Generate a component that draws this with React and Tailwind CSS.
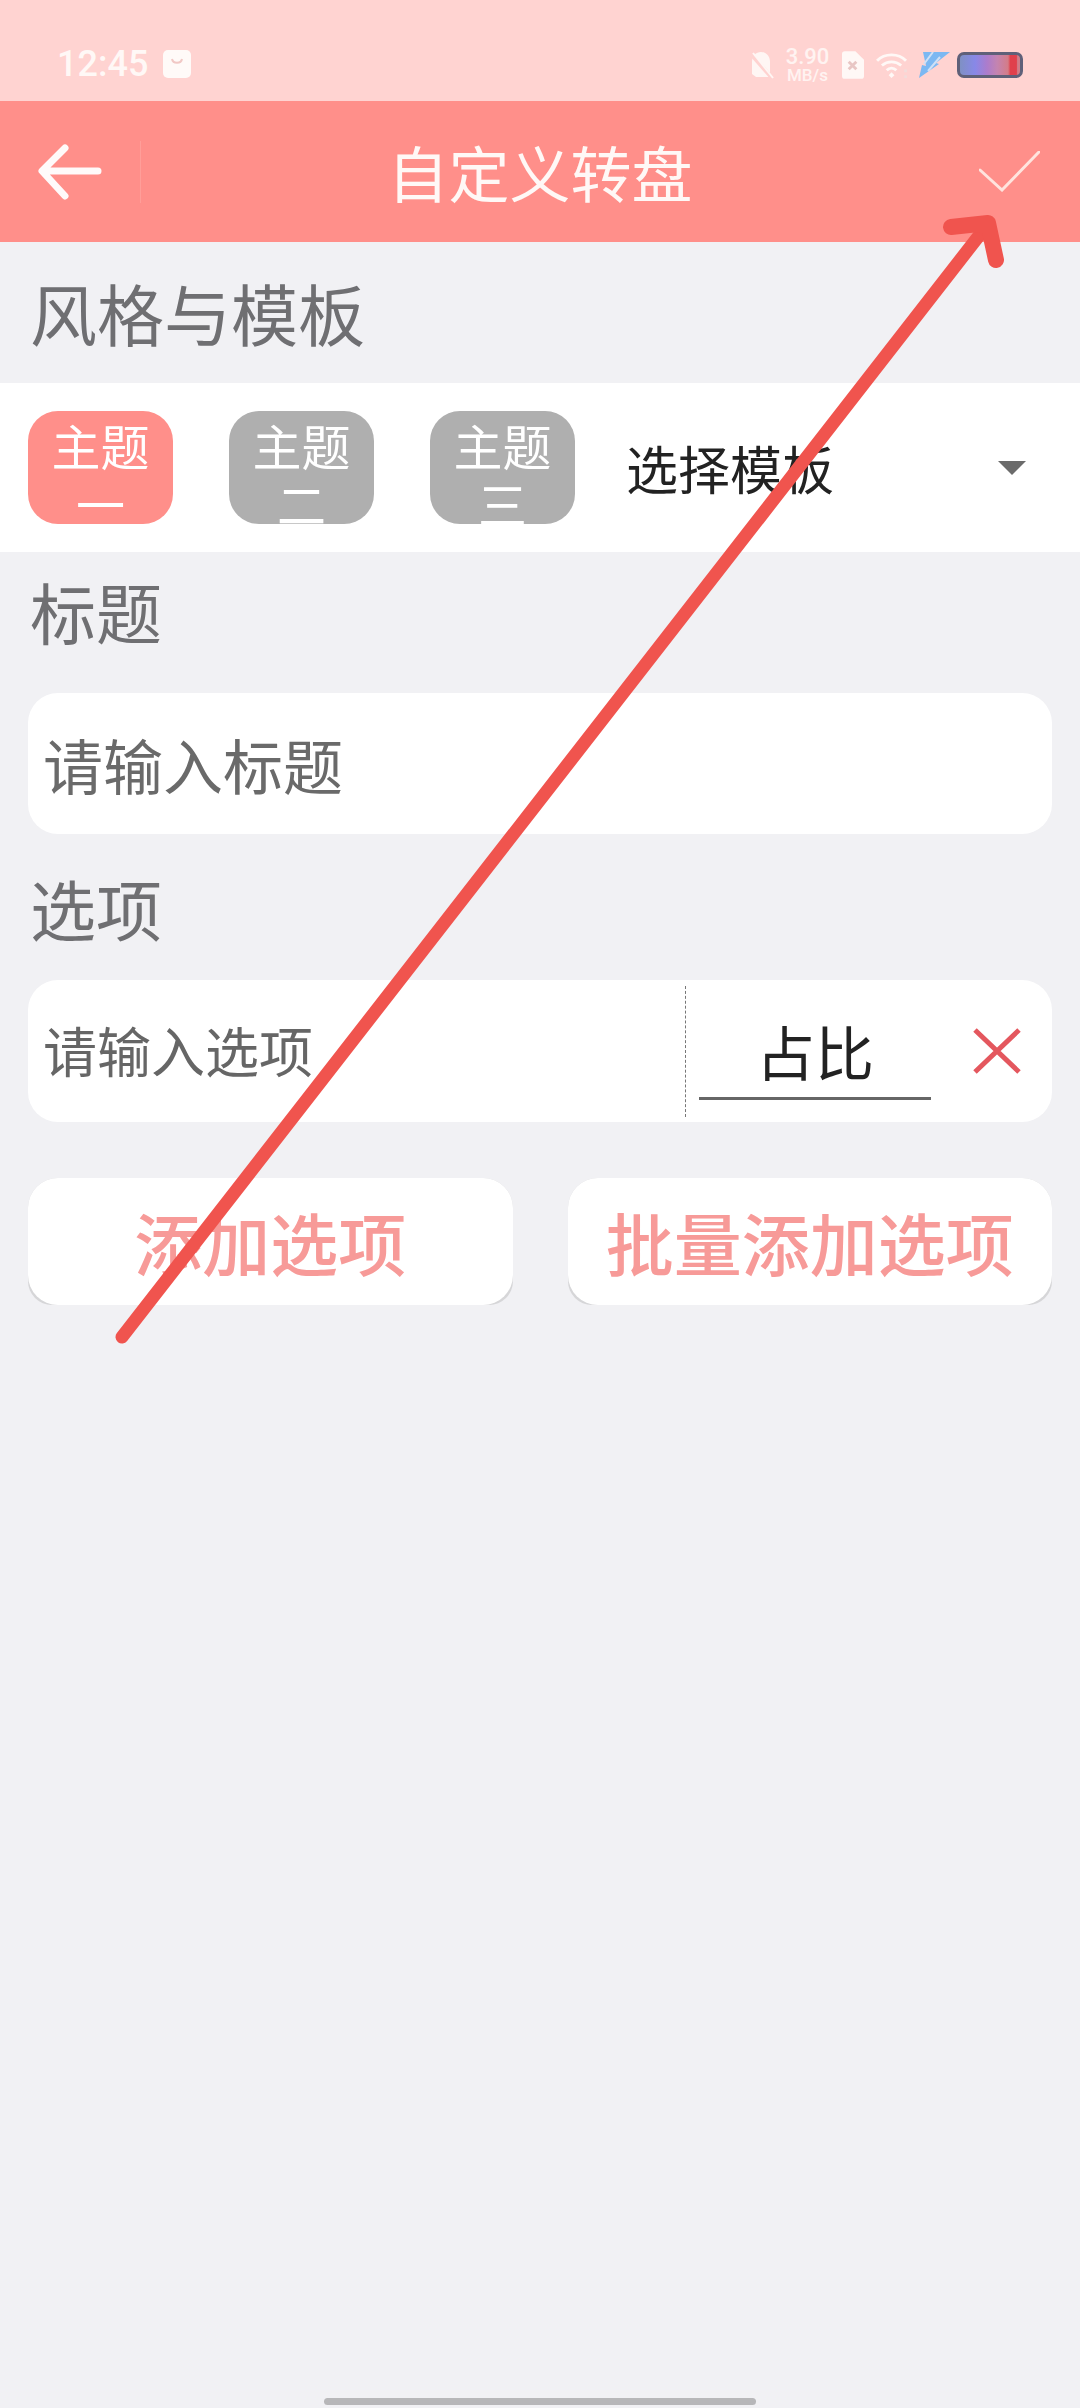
import React from 'react';

const CJK = "font-['Noto_Sans_CJK_SC','Noto_Sans',sans-serif]";

function StatusBar() {
  return (
    <div className="h-[101px] bg-[#ffd3d1] flex items-start pt-[47px] pl-[57px] pr-[57px] text-white">
      <span className="font-['Roboto',sans-serif] text-[36px] leading-[34px] font-medium text-[#fff8f6]">12:45</span>
      <svg width="28" height="28" viewBox="0 0 28 28" className="ml-[15px] mt-[3px]">
        <rect width="28" height="28" rx="5" fill="#fffaf8" />
        <path d="M9 9c1 5 9 5 10 0" fill="none" stroke="#f1c8c5" strokeWidth="2" />
      </svg>
      <div className="ml-auto flex items-center h-[36px]">
        {/* bell off */}
        <svg width="24" height="29" viewBox="0 0 24 29">
          <path d="M2 23V11C2 5 6 1 11 1s9 4 9 10v13l-2 2H6z" fill="#fff6f4" />
          <path d="M0 2l22 25" stroke="#ffd3d1" strokeWidth="4" />
          <path d="M3 2l20 25" stroke="#fff6f4" strokeWidth="2" />
        </svg>
        <div className="ml-[12px] w-[43px] flex flex-col items-center font-['Roboto',sans-serif] font-medium text-[#fff3f1]">
          <span className="text-[22px] leading-[20px]">3.90</span>
          <span className="text-[17px] leading-[16px]">MB/s</span>
        </div>
        {/* sim */}
        <svg width="22" height="28" viewBox="0 0 23 29" className="ml-[13px]">
          <path d="M3 0h11l9 9v17a3 3 0 0 1-3 3H3a3 3 0 0 1-3-3V3a3 3 0 0 1 3-3z" fill="#fff8f6" />
          <path d="M7 11l8 8M15 11l-8 8" stroke="#e8c6c4" strokeWidth="3" />
        </svg>
        {/* wifi */}
        <svg width="33" height="27" viewBox="0 0 34 28" fill="none" className="ml-[12px]" stroke="#fff8f6" strokeWidth="3">
          <path d="M1 9c8-8 22-8 30 0" />
          <path d="M6 14c6-5 14-5 20 0" />
          <path d="M11 19c3-3 7-3 10 0" />
          <path d="M13 24l3-3 3 3-3 3z" fill="#fff8f6" stroke="none" />
          <path d="M29 18h3v3h-3zM29 24h3v3h-3z" fill="#f3dcda" stroke="none" />
        </svg>
        {/* charging bolt */}
        <svg width="31" height="26" viewBox="0 0 31 26" className="ml-[10px]">
          <path d="M4 0H31L17 11l3 1L0 26l3-13 4 1z" fill="#7cb8f2" />
          <path d="M14 0L5 12M21 5L9 19" stroke="#cfe0f5" strokeWidth="2" />
        </svg>
        {/* battery */}
        <div className="ml-[7px] w-[66px] h-[26px] rounded-[7px] border-[3px] border-[#5f6079] bg-[linear-gradient(90deg,#7f90c4,#8888e8_25%,#ac7ccc_45%,#c484b0_62%,#d47c88_80%,#e0404c_84%,#e0404c_94%,#d07c88_96%)]" />
      </div>
    </div>
  );
}

function Header() {
  return (
    <div className="relative h-[141px] bg-[#ff8f8a] flex items-center justify-between pl-[38px] pr-[40px]">
      <div className="flex items-center gap-[38px]">
        <svg width="64" height="56" viewBox="0 0 64 56" fill="none" stroke="#fffafa" strokeWidth="7" strokeLinecap="round" strokeLinejoin="round">
          <path d="M60 27H5M27 4L4 27l23 25" />
        </svg>
        <div className="w-[1px] h-[62px] bg-[#ff9e99]" />
      </div>
      <span className="absolute left-0 right-0 text-center text-[61px] leading-[80px] text-[#fff8f6]">自定义转盘</span>
      <svg width="61" height="41" viewBox="0 0 61 41" fill="none" stroke="#ffe4de" strokeWidth="3" strokeLinecap="round">
        <path d="M1 19l22 20L60 1" />
      </svg>
    </div>
  );
}

function ThemeButton({ label, active }) {
  return (
    <div className={`w-[145px] h-[113px] rounded-[30px] overflow-hidden text-center text-white text-[49px] leading-[58px] pt-[5px] px-[4px] ${active ? 'bg-[#ff8f8a]' : 'bg-[#afafaf]'}`}>
      {label}
    </div>
  );
}

function ActionButton({ label }) {
  return (
    <div className="flex-1 h-[127px] rounded-[30px] rounded-b-[24px] bg-[#d6d6d8]">
      <div className="h-[127px] rounded-[30px] bg-white flex items-center justify-center text-[#f79a98] text-[68px] font-medium leading-none">
        {label}
      </div>
    </div>
  );
}

export default function App() {
  return (
    <div className={`relative h-[2408px] w-[1080px] overflow-hidden bg-[#f1f1f4] ${CJK}`}>
      <StatusBar />
      <Header />

      <div className="h-[141px] flex items-center px-[30px] text-[67px] text-[#6f6f72] leading-none pb-[2px]">风格与模板</div>

      <div className="h-[169px] bg-white flex items-center pl-[28px] pr-[54px]">
        <div className="flex gap-[56px] shrink-0">
          <ThemeButton label="主题一" active />
          <ThemeButton label="主题二" />
          <ThemeButton label="主题三" />
        </div>
        <span className="ml-[51px] text-[52px] leading-none text-[#222222]">选择模板</span>
        <div className="ml-auto w-0 h-0 border-x-[14px] border-x-transparent border-t-[14px] border-t-[#6b6b6b]" />
      </div>

      <div className="h-[141px] px-[30px] pt-[23px] text-[66px] leading-[70px] text-[#6f6f72]">标题</div>

      <div className="mx-[28px] h-[141px] rounded-[30px] bg-white flex items-center px-[15px] text-[60px] leading-none text-[#6a6a6a]">
        请输入标题
      </div>

      <div className="h-[146px] px-[30px] pt-[38px] text-[66px] leading-[70px] text-[#6f6f72]">选项</div>

      <div className="mx-[28px] h-[142px] rounded-[30px] bg-white flex items-center pl-[15px]">
        <span className="w-[642px] text-[54px] leading-none text-[#666666] shrink-0 -mt-[2px]">请输入选项</span>
        <div className="w-[2px] h-[131px] border-l border-dashed border-[#777777]" />
        <div className="ml-[12px] w-[232px] h-[118px] -mt-[20px] border-b-[3px] border-[#666666] flex items-center justify-center text-[59px] leading-none text-[#222222] pt-[22px] shrink-0">
          占比
        </div>
        <svg width="48" height="46" viewBox="0 0 48 46" fill="none" stroke="#e4575e" strokeWidth="5" className="ml-[42px] shrink-0">
          <path d="M2 2l44 42M46 2L2 44" />
        </svg>
      </div>

      <div className="mx-[28px] mt-[56px] flex gap-[55px]">
        <ActionButton label="添加选项" />
        <ActionButton label="批量添加选项" />
      </div>

      <div className="absolute bottom-[3px] left-[324px] w-[432px] h-[7px] rounded-full bg-[#b7b7b9]" />

      {/* hand drawn annotation arrow */}
      <svg width="1080" height="2408" viewBox="0 0 1080 2408" fill="none" className="absolute inset-0 pointer-events-none" stroke="#f0544e" strokeLinecap="round" strokeLinejoin="round">
        <path d="M122 1337L985 228" strokeWidth="13" />
        <path d="M951 227L988 223L996 260" strokeWidth="16" />
      </svg>
    </div>
  );
}
